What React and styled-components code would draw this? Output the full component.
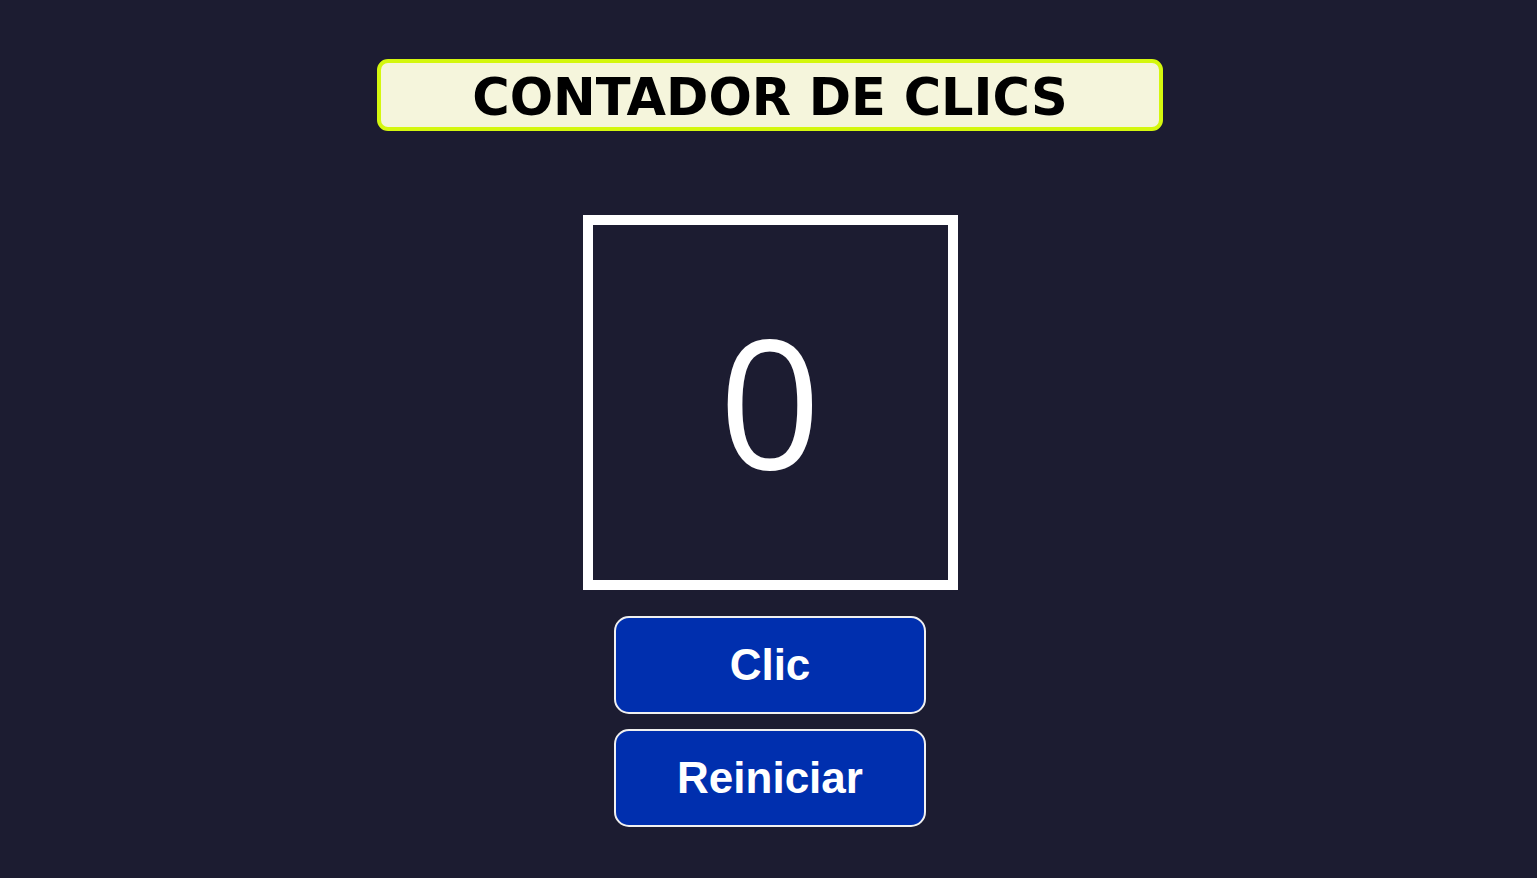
import React, { useState } from "react";
import styled, { createGlobalStyle } from "styled-components";

const GlobalStyle = createGlobalStyle`
    body {
        margin: 0;
        background-color: #1c1c31;
        font-family: "Liberation Sans", Arial, sans-serif;
    }
`;

export default function App() {
    const [count, setCount] = useState(0);

    return (
        <>
            <GlobalStyle />
            <Page>
                <Title>CONTADOR DE CLICS</Title>
                <Counter>{count}</Counter>
                <Buttons>
                    <Button onClick={() => setCount(count + 1)}>Clic</Button>
                    <Button onClick={() => setCount(0)}>Reiniciar</Button>
                </Buttons>
            </Page>
        </>
    );
}

const Page = styled.div`
    min-height: 100vh;
    display: flex;
    flex-direction: column;
    align-items: center;
    padding-top: 59px;
    box-sizing: border-box;
`;

const Title = styled.h1`
    margin: 0 0 84px 3px;
    width: 786px;
    height: 72px;
    box-sizing: border-box;
    border: 4px solid #d4f70e;
    border-radius: 11px;
    background-color: #f5f5dc;
    color: #000;
    font-family: "DejaVu Sans", Verdana, sans-serif;
    font-weight: 700;
    font-size: 51px;
    line-height: 69px;
    text-align: center;
    overflow: hidden;
`;

const Counter = styled.div`
    width: 375px;
    height: 375px;
    box-sizing: border-box;
    border: 10px solid #fff;
    margin-left: 3px;
    padding-bottom: 6px;
    display: flex;
    align-items: center;
    justify-content: center;
    color: #fff;
    font-family: "Open Sans", sans-serif;
    font-size: 179px;
    line-height: 1;
`;

const Buttons = styled.div`
    margin-top: 26px;
    margin-left: 3px;
    display: flex;
    flex-direction: column;
    gap: 15px;
`;

const Button = styled.button`
    width: 312px;
    height: 98px;
    border: 2px solid #f0f0f0;
    border-radius: 15px;
    background-color: #002fae;
    color: #fff;
    font-family: "Liberation Sans", Arial, sans-serif;
    font-weight: 700;
    font-size: 44px;
    cursor: pointer;
`;
